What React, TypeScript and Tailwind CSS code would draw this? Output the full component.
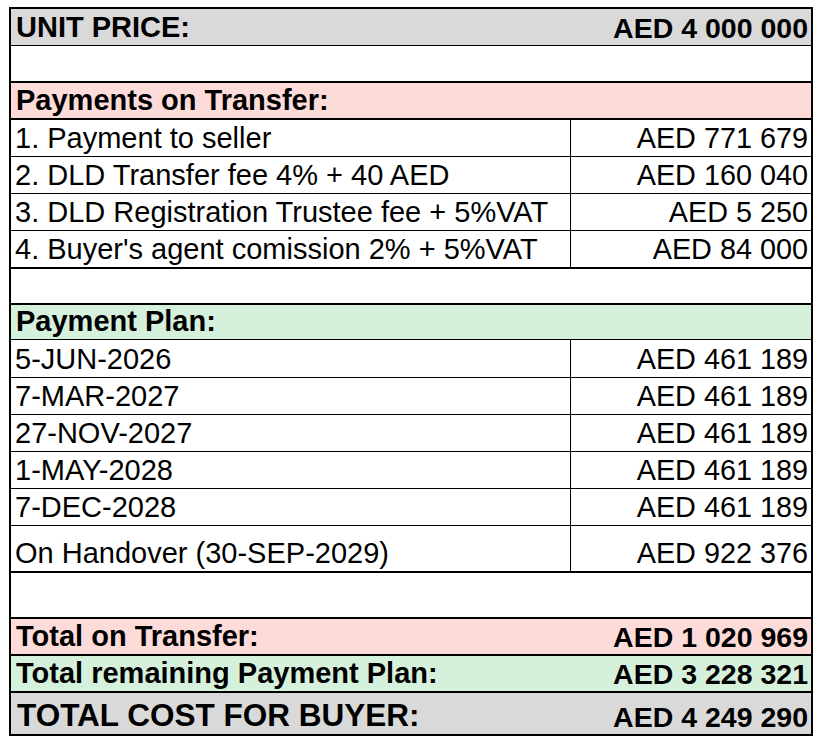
import React from "react"

type RowProps = {
  label?: string
  value?: string
  bg?: string
  h: string
  b: string
  bold?: boolean
  big?: boolean
  split?: boolean
}

function Row({ label, value, bg = "bg-white", h, b, bold, big, split }: RowProps) {
  const labelText = bold
    ? big
      ? "font-bold text-[31.5px] pl-[6px]"
      : "font-bold text-[29px] pl-[5px]"
    : "text-[29px] pl-[4px]"
  return (
    <div className={`flex ${h} ${b} border-black ${bg}`}>
      <div
        className={`flex items-end pb-[3px] ${split ? "w-[560px] border-r border-black" : "flex-1"} ${labelText} leading-none whitespace-nowrap`}
      >
        {label}
      </div>
      <div className={`flex items-end justify-end pb-[3px] pr-[3px] ${split ? "flex-1" : "w-[300px]"} ${bold ? "font-bold text-[28.5px]" : "text-[28.8px]"} leading-none whitespace-nowrap`}>
        {value}
      </div>
    </div>
  )
}

export default function App() {
  return (
    <div className="min-h-screen bg-white pt-[7px] pl-[9px] text-black" style={{ fontFamily: '"Liberation Sans", Arial, sans-serif' }}>
      <div className="w-[804px] border-2 border-black flex flex-col">
        <Row label="UNIT PRICE:" value="AED 4 000 000" bg="bg-[#d9d9d9]" h="h-[37px]" b="border-b" bold />
        <Row h="h-[37px]" b="border-b-2" />
        <Row label="Payments on Transfer:" bg="bg-[#fddbd9]" h="h-[37px]" b="border-b-2" bold />
        <Row label="1. Payment to seller" value="AED 771 679" h="h-[37px]" b="border-b" split />
        <Row label="2. DLD Transfer fee 4% + 40 AED" value="AED 160 040" h="h-[37px]" b="border-b" split />
        <Row label="3. DLD Registration Trustee fee + 5%VAT" value="AED 5 250" h="h-[37px]" b="border-b" split />
        <Row label="4. Buyer's agent comission 2% + 5%VAT" value="AED 84 000" h="h-[38px]" b="border-b-2" split />
        <Row h="h-[36px]" b="border-b-2" />
        <Row label="Payment Plan:" bg="bg-[#d5f0db]" h="h-[35px]" b="border-b" bold />
        <Row label="5-JUN-2026" value="AED 461 189" h="h-[38px]" b="border-b" split />
        <Row label="7-MAR-2027" value="AED 461 189" h="h-[37px]" b="border-b" split />
        <Row label="27-NOV-2027" value="AED 461 189" h="h-[37px]" b="border-b" split />
        <Row label="1-MAY-2028" value="AED 461 189" h="h-[37px]" b="border-b" split />
        <Row label="7-DEC-2028" value="AED 461 189" h="h-[37px]" b="border-b" split />
        <Row label="On Handover (30-SEP-2029)" value="AED 922 376" h="h-[47px]" b="border-b-2" split />
        <Row h="h-[46px]" b="border-b-2" />
        <Row label="Total on Transfer:" value="AED 1 020 969" bg="bg-[#fddbd9]" h="h-[37px]" b="border-b-2" bold />
        <Row label="Total remaining Payment Plan:" value="AED 3 228 321" bg="bg-[#d5f0db]" h="h-[37px]" b="border-b-2" bold />
        <Row label="TOTAL COST FOR BUYER:" value="AED 4 249 290" bg="bg-[#d9d9d9]" h="h-[41px]" b="" bold big />
      </div>
    </div>
  )
}
